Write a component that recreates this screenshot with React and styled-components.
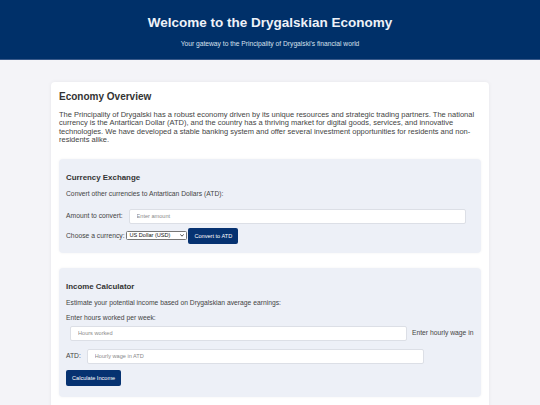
import React from 'react';
import styled, { createGlobalStyle } from 'styled-components';

const GlobalStyle = createGlobalStyle`
  html, body {
    margin: 0;
    padding: 0;
    background: #f4f4f8;
    font-family: "Liberation Sans", Arial, sans-serif;
    color: #333;
  }
`;

const Header = styled.header`
  background: #003069;
  border-bottom: 1px solid #3a5a8a;
  padding: 15px 0 11px;
  text-align: center;
  color: #eef2f8;

  h1 {
    margin: 0 0 9px;
    font-size: 13.5px;
    line-height: 16px;
    font-weight: bold;
  }

  p {
    margin: 0;
    font-size: 6.7px;
    line-height: 8px;
    color: #d8e0ee;
  }
`;

const Card = styled.main`
  width: 422px;
  margin: 22px auto 0;
  padding: 8px 8px 20px;
  background: #fff;
  border-radius: 4px;
  box-shadow: 0 0 4px rgba(0, 0, 0, 0.06);

  h2 {
    margin: 0 0 8px;
    font-size: 10px;
    line-height: 13px;
    color: #333;
  }
`;

const Intro = styled.p`
  margin: 0 0 14px;
  font-size: 7.5px;
  line-height: 8.4px;
  color: #444;
`;

const Panel = styled.section`
  background: #edf0f7;
  border-radius: 4px;
  padding: 14px 7px ${p => p.$bottom}px;
  margin-bottom: 15px;
  box-shadow: 0 0 3px rgba(0, 0, 0, 0.05);

  h3 {
    margin: 0 0 7px;
    font-size: 7.9px;
    line-height: 10px;
    color: #333;
  }
`;

const Note = styled.p`
  margin: 0 0 7px;
  font-size: 6.75px;
  line-height: 8px;
  color: #444;
`;

const Flow = styled.div`
  font-size: 6.75px;
  line-height: 8px;
  color: #444;
`;

const Label = styled.label`
  display: inline;
`;

const Field = styled.input`
  display: inline-block;
  box-sizing: border-box;
  width: 337px;
  height: 15px;
  margin: 4px 3px 4px 4px;
  padding: 0 7px;
  border: 1px solid #dcdfe6;
  border-radius: 2px;
  background: #fff;
  font-family: inherit;
  font-size: 5.6px;
  vertical-align: middle;
  outline: none;

  &::placeholder {
    color: #8a8a8a;
  }
`;

const SelectWrap = styled.span`
  position: relative;
  display: inline-block;
  vertical-align: middle;
  line-height: 0;
`;

const Select = styled.select`
  appearance: none;
  box-sizing: border-box;
  width: 61px;
  height: 9px;
  padding: 0 0 0 2px;
  font-family: inherit;
  font-size: 5.6px;
  line-height: 7px;
  border: 1px solid #767676;
  border-radius: 1.5px;
  background: #fff;
  color: #111;
  outline: none;
`;

const Chevron = styled.svg`
  position: absolute;
  right: 3px;
  top: 3px;
  width: 4px;
  height: 3px;
  pointer-events: none;
`;

const Button = styled.button`
  display: inline-block;
  height: 16px;
  padding: 0 ${p => p.$pad}px;
  border: none;
  border-radius: 2px;
  background: #063271;
  color: #fff;
  font-family: inherit;
  font-size: 5.6px;
  vertical-align: middle;
  margin-top: ${p => p.$top || 0}px;
  margin-left: ${p => p.$left || 0}px;
`;

export default function App() {
  return (
    <>
      <GlobalStyle />
      <Header>
        <h1>Welcome to the Drygalskian Economy</h1>
        <p>Your gateway to the Principality of Drygalski's financial world</p>
      </Header>

      <Card>
        <h2>Economy Overview</h2>
        <Intro>
          The Principality of Drygalski has a robust economy driven by its unique resources and strategic trading
          partners. The national currency is the Antartican Dollar (ATD), and the country has a thriving market for
          digital goods, services, and innovative technologies. We have developed a stable banking system and offer
          several investment opportunities for residents and non-residents alike.
        </Intro>

        <Panel $bottom={9}>
          <h3>Currency Exchange</h3>
          <Note>Convert other currencies to Antartican Dollars (ATD):</Note>
          <Flow>
            <Label>Amount to convert:</Label> <Field type="number" placeholder="Enter amount" />
            <br />
            <Label>Choose a currency:</Label>{' '}
            <SelectWrap>
              <Select defaultValue="USD">
                <option value="USD">US Dollar (USD)</option>
                <option value="EUR">Euro (EUR)</option>
                <option value="GBP">British Pound (GBP)</option>
              </Select>
              <Chevron viewBox="0 0 8 6">
                <path d="M1 1.2 L4 4.4 L7 1.2" fill="none" stroke="#222" strokeWidth="1.6" strokeLinecap="round" />
              </Chevron>
            </SelectWrap>
            <Button $pad={6} $left={1}>Convert to ATD</Button>
          </Flow>
        </Panel>

        <Panel $bottom={11}>
          <h3>Income Calculator</h3>
          <Note>Estimate your potential income based on Drygalskian average earnings:</Note>
          <Flow>
            <Label>Enter hours worked per week:</Label> <Field type="number" placeholder="Hours worked" />{' '}
            <Label>Enter hourly wage in ATD:</Label> <Field type="number" placeholder="Hourly wage in ATD" />{' '}
            <Button $pad={6} $top={2}>Calculate Income</Button>
          </Flow>
        </Panel>
      </Card>
    </>
  );
}
